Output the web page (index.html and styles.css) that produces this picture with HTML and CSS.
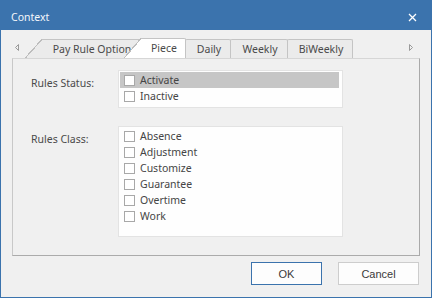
FILE: index.html
```html
<!DOCTYPE html>
<html lang="en">
<head>
    <meta charset="UTF-8">
    <title>Context</title>
    <link rel="stylesheet" href="styles.css">
</head>
<body>
    <div class="window">
        <div class="titlebar">
            <span class="title">Context</span>
            <svg class="close" width="9" height="9" viewBox="0 0 9 9">
                <path d="M1 1 L8 8 M8 1 L1 8" stroke="#fff" stroke-width="1.3"/>
            </svg>
        </div>

        <div class="tabrow">
            <div class="scroll scroll-left">
                <svg width="6" height="9" viewBox="0 0 6 9"><path d="M4.5 1.5 L1.5 4.5 L4.5 7.5 Z" fill="none" stroke="#9a9a9a"/></svg>
            </div>
            <div class="tab slant tab-pay">Pay Rule Option</div>
            <div class="tab slant active tab-piece">Piece</div>
            <div class="tab tab-daily">Daily</div>
            <div class="tab tab-weekly">Weekly</div>
            <div class="tab tab-biweekly">BiWeekly</div>
            <div class="tab-spacer"></div>
            <div class="scroll scroll-right">
                <svg width="6" height="9" viewBox="0 0 6 9"><path d="M1.5 1.5 L4.5 4.5 L1.5 7.5 Z" fill="none" stroke="#9a9a9a"/></svg>
            </div>
        </div>

        <div class="panel">
            <div class="field-label">Rules Status:</div>
            <div class="listbox status-list">
                <div class="row selected"><span class="check"></span>Activate</div>
                <div class="row"><span class="check"></span>Inactive</div>
            </div>

            <div class="field-label">Rules Class:</div>
            <div class="listbox class-list">
                <div class="row"><span class="check"></span>Absence</div>
                <div class="row"><span class="check"></span>Adjustment</div>
                <div class="row"><span class="check"></span>Customize</div>
                <div class="row"><span class="check"></span>Guarantee</div>
                <div class="row"><span class="check"></span>Overtime</div>
                <div class="row"><span class="check"></span>Work</div>
            </div>
        </div>

        <div class="buttons">
            <button class="btn btn-ok">OK</button>
            <button class="btn btn-cancel">Cancel</button>
        </div>
    </div>
</body>
</html>
```

FILE: styles.css
```css
body {
    margin: 0;
    font-family: "Noto Sans", "Open Sans", sans-serif;
    font-size: 10.5px;
    color: #4a4a4a;
}

.window {
    width: 432px;
    height: 298px;
    box-sizing: border-box;
    border: 1px solid #3b73ad;
    background: #f0f0f0;
    display: flex;
    flex-direction: column;
}

.titlebar {
    height: 29px;
    box-sizing: border-box;
    padding: 3px 14px 0 10px;
    background: #3b73ad;
    color: #f4f7fb;
    display: flex;
    align-items: center;
    justify-content: space-between;
    font-size: 10.5px;
}

/* tabs */
.tabrow {
    height: 21px;
    margin: 7px 11px 0;
    display: flex;
    align-items: flex-end;
}

.scroll {
    height: 21px;
    display: flex;
    align-items: center;
}

.scroll-left {
    width: 30px;
    padding-left: 2px;
    box-sizing: border-box;
}

.scroll-right {
    width: 12px;
}

.tab-spacer {
    flex-grow: 1;
}

.tab {
    position: relative;
    height: 19px;
    box-sizing: border-box;
    line-height: 18px;
    padding-left: 2px;
    text-align: center;
    white-space: nowrap;
    color: #4a4a4a;
    background: #ebebeb;
    border: 1px solid #c4c4c4;
    border-bottom: none;
    border-radius: 2px 2px 0 0;
    margin-left: -1px;
}

.tab.active {
    height: 20px;
    background: #fff;
    line-height: 19px;
}

.tab.slant {
    border-left: none;
    border-top-left-radius: 0;
    margin-left: 0;
}

.tab.slant::before {
    content: '';
    position: absolute;
    left: -17px;
    top: -1px;
    width: 17px;
    height: calc(100% + 1px);
    background: linear-gradient(to top left, #ebebeb calc(50% - 0.8px), #bdbdbd calc(50% - 0.8px), #bdbdbd calc(50% + 0.4px), transparent calc(50% + 0.4px));
}

.tab.slant.active::before {
    background: linear-gradient(to top left, #fff calc(50% - 0.8px), #bdbdbd calc(50% - 0.8px), #bdbdbd calc(50% + 0.4px), transparent calc(50% + 0.4px));
}

.tab-pay { width: 99px; border-top-right-radius: 0; }
.tab-piece { width: 45px; }
.tab-daily { width: 46px; }
.tab-weekly { width: 58px; }
.tab-biweekly { width: 66px; }

/* page */
.panel {
    height: 198px;
    box-sizing: border-box;
    margin: 0 11px;
    padding: 11px 0 0;
    border: 1px solid #c8c8c8;
    border-top-color: #d6d6d6;
    border-right-color: #a9a9a9;
    border-bottom-color: #ababab;
    display: grid;
    grid-template-columns: 105px 225px;
    grid-template-rows: auto auto;
    row-gap: 18px;
    align-content: start;
}

.field-label {
    padding: 5px 0 0 18px;
    line-height: 16px;
}

.listbox {
    box-sizing: border-box;
    padding: 1px 3px 3px 1px;
    background: #fefefe;
    border: 1px solid #e3e3e3;
}

.class-list {
    height: 111px;
}

.row {
    height: 16px;
    display: flex;
    align-items: center;
    padding-left: 4px;
    color: #454545;
}

.row.selected {
    background: #c6c6c6;
}

.check {
    width: 11px;
    height: 11px;
    box-sizing: border-box;
    border: 1px solid #a8a8a8;
    background: #fff;
    margin-right: 5px;
}

/* dialog buttons */
.buttons {
    display: flex;
    justify-content: flex-end;
    gap: 16px;
    margin-top: 6px;
    padding-right: 12px;
}

.btn {
    height: 23px;
    box-sizing: border-box;
    padding: 0;
    font-family: "Liberation Sans", Arial, sans-serif;
    font-size: 11px;
    color: #3a3a3a;
    background: #fdfdfd;
    border: 1px solid #cdcdcd;
}

.btn-ok {
    width: 71px;
    border-color: #3b73ad;
}

.btn-cancel {
    width: 81px;
}
```
